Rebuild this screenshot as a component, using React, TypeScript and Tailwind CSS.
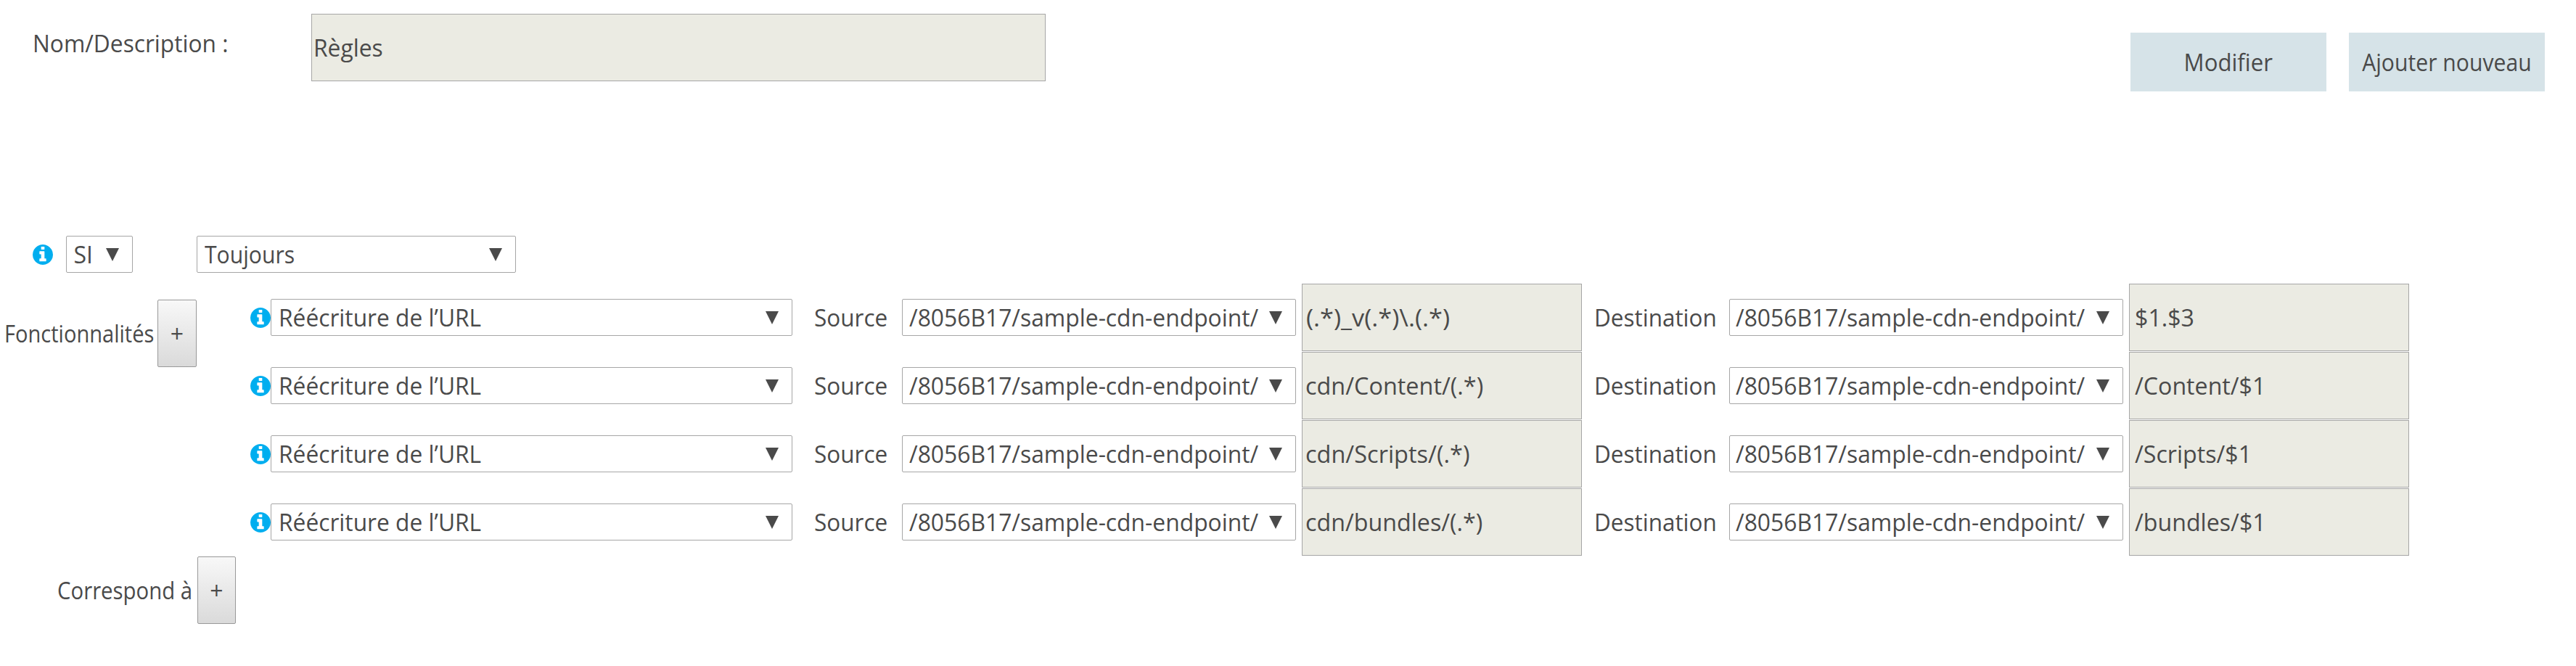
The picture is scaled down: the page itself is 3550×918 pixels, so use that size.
import type { ReactNode } from "react";

type Rule = { source: string; sourceScale: string; destination: string };

const ENDPOINT = "/8056B17/sample-cdn-endpoint/";

const rules: Rule[] = [
  { source: "(.*)_v(.*)\\.(.*)", sourceScale: "ml-px scale-x-[1.071]", destination: "$1.$3" },
  { source: "cdn/Content/(.*)", sourceScale: "scale-x-[1.012]", destination: "/Content/$1" },
  { source: "cdn/Scripts/(.*)", sourceScale: "scale-x-[1.015]", destination: "/Scripts/$1" },
  { source: "cdn/bundles/(.*)", sourceScale: "scale-x-[1.007]", destination: "/bundles/$1" },
];

function Text({ className = "", children }: { className?: string; children: ReactNode }) {
  return <span className={`inline-block origin-left ${className}`}>{children}</span>;
}

function InfoIcon() {
  return (
    <svg viewBox="0 128 1536 1536" className="mt-[1.5px] size-[28px] shrink-0 fill-[#00aeef]">
      <path d="M1024 1376v-160q0-14-9-23t-23-9h-96v-512q0-14-9-23t-23-9h-320q-14 0-23 9t-9 23v160q0 14 9 23t23 9h96v320h-96q-14 0-23 9t-9 23v160q0 14 9 23t23 9h448q14 0 23-9t9-23zm-128-896v-160q0-14-9-23t-23-9h-192q-14 0-23 9t-9 23v160q0 14 9 23t23 9h192q14 0 23-9t9-23zm640 416q0 209-103 385.5t-279.5 279.5-385.5 103-385.5-103-279.5-279.5-103-385.5 103-385.5 279.5-279.5 385.5-103 385.5 103 279.5 279.5 103 385.5z" />
    </svg>
  );
}

function SelectBox({ className, children }: { className: string; children: ReactNode }) {
  return (
    <div
      className={`flex h-[51px] shrink-0 items-center justify-between rounded-[2px] border border-[#a6a6a6] bg-white pr-[18px] ${className}`}
    >
      {children}
      <svg viewBox="0 0 18 18" className="-ml-4 size-[18px] shrink-0 fill-[#4a4a4a]">
        <path d="M0 0h18L9 18z" />
      </svg>
    </div>
  );
}

function Field({ className, children }: { className: string; children: ReactNode }) {
  return (
    <div className={`flex h-[93px] shrink-0 items-center border border-[#a6a6a6] bg-[#ebebe3] ${className}`}>
      {children}
    </div>
  );
}

function ActionButton({ className, children }: { className: string; children: ReactNode }) {
  return (
    <button className={`flex h-[81px] w-[270px] items-center justify-center bg-[#d6e3e8] ${className}`}>
      {children}
    </button>
  );
}

function AddButton({ className }: { className: string }) {
  return (
    <button
      className={`flex h-[93px] shrink-0 items-center justify-center rounded-[2px] border border-[#999999] bg-linear-to-b from-[#f8f8f8] to-[#dadada] ${className}`}
    >
      +
    </button>
  );
}

function RuleRow({ rule }: { rule: Rule }) {
  return (
    <div className="flex h-[93px] items-center">
      <InfoIcon />
      <SelectBox className="w-[719px] pl-[9.5px]">
        <Text className="scale-x-[0.991]">Réécriture de l’URL</Text>
      </SelectBox>
      <div className="w-[151px] shrink-0 pl-[30px]">
        <Text className="scale-x-[0.985]">Source</Text>
      </div>
      <SelectBox className="w-[543px] pl-[8.5px]">
        <Text className="scale-x-[0.994]">{ENDPOINT}</Text>
      </SelectBox>
      <Field className="ml-2 w-[386px] pl-[4px]">
        <Text className={rule.sourceScale}>{rule.source}</Text>
      </Field>
      <div className="w-[203px] shrink-0 pl-[17px]">
        <Text className="scale-x-[0.983]">Destination</Text>
      </div>
      <SelectBox className="w-[543px] pl-[7.5px]">
        <Text className="scale-x-[0.994]">{ENDPOINT}</Text>
      </SelectBox>
      <Field className="ml-2 w-[386px] pl-[6.5px]">
        <Text className="scale-x-[1.005]">{rule.destination}</Text>
      </Field>
    </div>
  );
}

export default function App() {
  return (
    <div className="h-[918px] w-[3550px] overflow-hidden whitespace-nowrap bg-white pt-[19px] font-['Open_Sans',sans-serif] text-[32px] leading-[44px] text-[#4a4a4a]">
      <header className="flex h-[306px] items-start pl-[45px]">
        <div className="w-[384px] pt-[19px]">
          <Text className="scale-x-[0.99]">Nom/Description :</Text>
        </div>
        <Field className="w-[1012px] pl-[2px]">
          <Text className="scale-x-[0.993]">Règles</Text>
        </Field>
        <ActionButton className="mt-[26px] ml-[1495px]">
          <span className="inline-block scale-x-[0.975]">Modifier</span>
        </ActionButton>
        <ActionButton className="mt-[26px] ml-[31px]">
          <span className="inline-block scale-x-[0.942]">Ajouter nouveau</span>
        </ActionButton>
      </header>

      <section className="flex h-[66px] items-start pl-[45px]">
        <div className="flex h-[51px] items-center">
          <InfoIcon />
          <SelectBox className="ml-[18px] w-[92px] pl-[9.5px]">
            <Text>SI</Text>
          </SelectBox>
          <SelectBox className="ml-[88px] w-[440px] pl-[9.5px]">
            <Text className="scale-x-[0.942]">Toujours</Text>
          </SelectBox>
        </div>
      </section>

      <section className="flex">
        <div className="flex h-[115px] w-[345px] shrink-0 items-end">
          <div className="flex h-[93px] items-center">
            <div className="w-[217px] pl-[5.5px]">
              <Text className="scale-x-[0.908]">Fonctionnalités</Text>
            </div>
            <AddButton className="w-[54px]" />
          </div>
        </div>
        <div className="flex flex-col gap-px pb-px">
          {rules.map((rule) => (
            <RuleRow key={rule.source} rule={rule} />
          ))}
        </div>
      </section>

      <section className="flex h-[93px] items-center">
        <div className="w-[272px] pl-[78.5px]">
          <Text className="scale-x-[0.917]">Correspond à</Text>
        </div>
        <AddButton className="w-[53px]" />
      </section>
    </div>
  );
}
